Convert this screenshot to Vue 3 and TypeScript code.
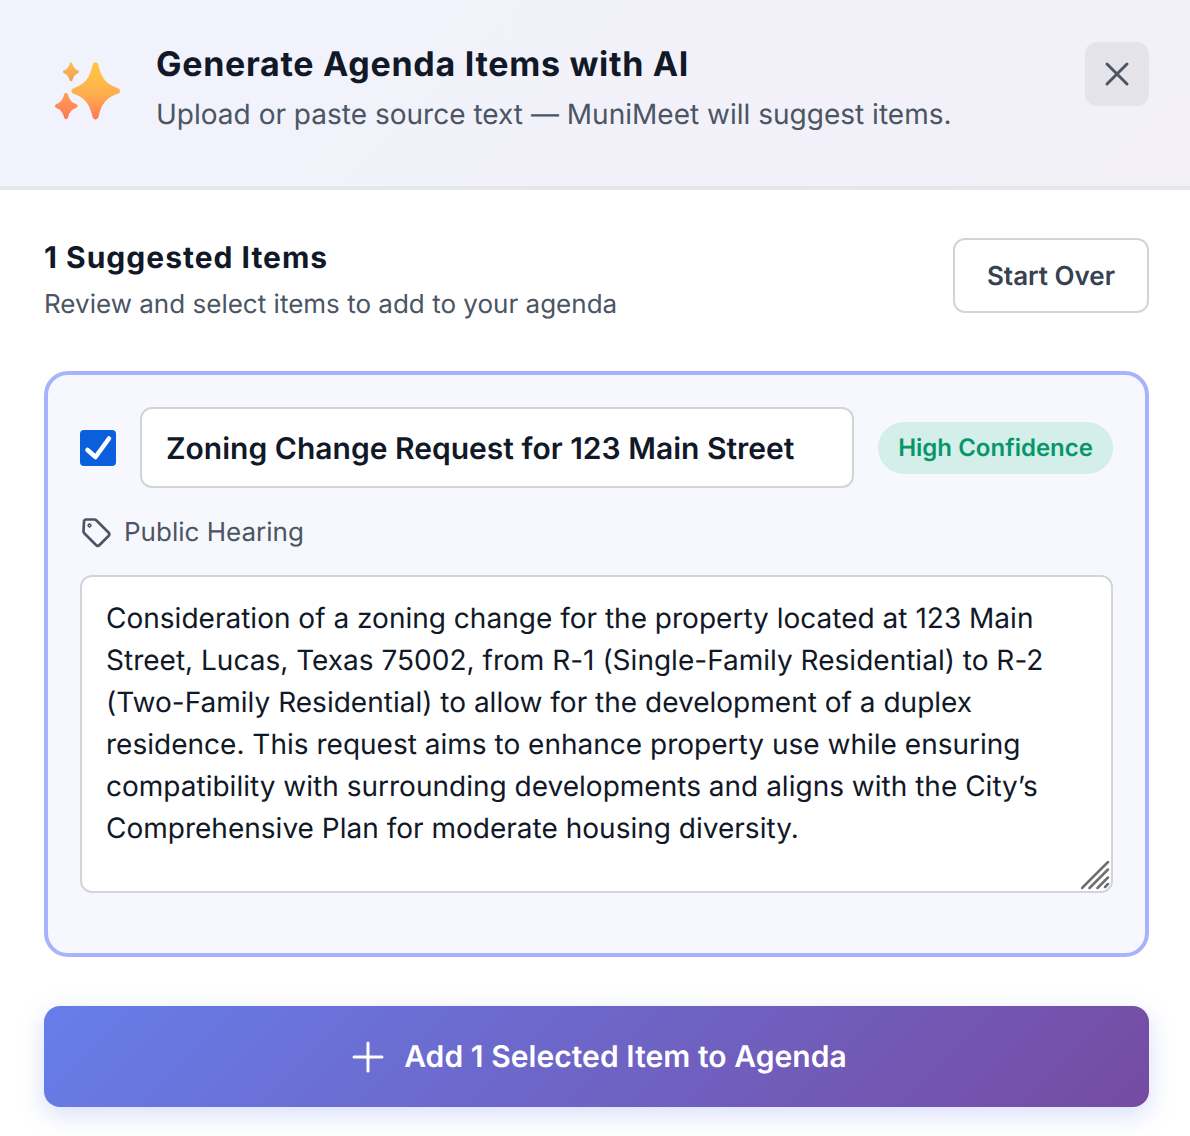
<script setup lang="ts">
import { ref } from 'vue'

const selected = ref(true)
const title = ref('Zoning Change Request for 123 Main Street')
const description = ref(
  'Consideration of a zoning change for the property located at 123 Main Street, Lucas, Texas 75002, from R-1 (Single-Family Residential) to R-2 (Two-Family Residential) to allow for the development of a duplex residence. This request aims to enhance property use while ensuring compatibility with surrounding developments and aligns with the City’s Comprehensive Plan for moderate housing diversity.'
)
</script>

<template>
  <div class="modal">
    <header class="modal-header">
      <svg class="sparkles" width="66" height="58" viewBox="0 0 66 58" aria-hidden="true">
        <defs>
          <linearGradient id="spark-a" x1="0" y1="0" x2="0" y2="1">
            <stop offset="0" stop-color="#ffc445" />
            <stop offset="0.55" stop-color="#ffb04e" />
            <stop offset="1" stop-color="#ff7f55" />
          </linearGradient>
          <linearGradient id="spark-b" x1="0" y1="0" x2="0" y2="1">
            <stop offset="0" stop-color="#fbbf50" />
            <stop offset="1" stop-color="#f49d58" />
          </linearGradient>
          <linearGradient id="spark-c" x1="0" y1="0" x2="0" y2="1">
            <stop offset="0" stop-color="#ff9c50" />
            <stop offset="1" stop-color="#ff7a5a" />
          </linearGradient>
        </defs>
        <path fill="url(#spark-a)" stroke="url(#spark-a)" stroke-width="6" stroke-linejoin="round"
          d="M40.5 3.500 C43.500 18 49.500 25 62 29 C49.500 33 43.500 40 40.5 54.500 C37.500 40 31.500 33 19.500 29 C31.500 25 37.500 18 40.5 3.500 Z" />
        <path fill="url(#spark-b)" stroke="url(#spark-b)" stroke-width="3" stroke-linejoin="round"
          d="M16 2 C17 6.500 18.800 8.600 22.500 9.800 C18.800 11 17 13.200 16 17.800 C15 13.200 13.200 11 9.500 9.800 C13.200 8.600 15 6.500 16 2 Z" />
        <path fill="url(#spark-c)" stroke="url(#spark-c)" stroke-width="4" stroke-linejoin="round"
          d="M11 33 C12.300 39.300 15.300 42.500 20.500 44 C15.300 45.500 12.300 48.700 11 55 C9.700 48.700 6.700 45.500 2 44 C6.700 42.500 9.700 39.300 11 33 Z" />
      </svg>
      <div class="header-text">
        <h2 class="header-title">Generate Agenda Items with AI</h2>
        <p class="header-sub">Upload or paste source text — MuniMeet will suggest items.</p>
      </div>
      <button class="close-btn" type="button" aria-label="Close">
        <svg width="32" height="32" viewBox="0 0 32 32" fill="none" stroke="#4b5563" stroke-width="3" stroke-linecap="round">
          <path d="M6 6 L26 26 M26 6 L6 26" />
        </svg>
      </button>
    </header>

    <main class="modal-body">
      <div class="results-head">
        <div>
          <h3 class="results-title">1 Suggested Items</h3>
          <p class="results-sub">Review and select items to add to your agenda</p>
        </div>
        <button class="start-over" type="button">Start Over</button>
      </div>

      <section class="item-card">
        <div class="item-top">
          <label class="check">
            <input v-model="selected" type="checkbox" />
            <svg v-if="selected" width="36" height="36" viewBox="0 0 36 36" fill="none" stroke="#fff" stroke-width="4.500" stroke-linecap="round" stroke-linejoin="round">
              <path d="M7.500 20 L15.500 27 L29 8.500" />
            </svg>
          </label>
          <input v-model="title" class="title-input" type="text" />
          <span class="confidence">High Confidence</span>
        </div>

        <div class="item-type">
          <svg width="32" height="32" viewBox="0 0 32 32" fill="none" stroke="#4b5563" stroke-width="2.700" stroke-linecap="round" stroke-linejoin="round">
            <path d="M4 5.500 A2 2 0 0 1 6 3.500 H14 A3.500 3.500 0 0 1 16.500 4.500 L28.500 16.500 A2.500 2.500 0 0 1 28.500 20 L19.500 29 A2.500 2.500 0 0 1 16 29 L4.500 17.500 A3 3 0 0 1 3.500 15 Z" />
            <circle cx="9.500" cy="9.500" r="0.800" />
          </svg>
          <span class="type-label">Public Hearing</span>
        </div>

        <div class="desc-wrap">
          <textarea v-model="description" class="desc" rows="7" spellcheck="false"></textarea>
          <svg class="grip" width="30" height="30" viewBox="0 0 30 30" stroke="#6f6f6f" stroke-width="2.500" stroke-linecap="round" aria-hidden="true">
            <path d="M1 27 L27 1 M8.500 27 L27 8.500 M16.500 27 L27 16.500 M24 26 L27 23" />
          </svg>
        </div>
      </section>

      <button class="add-btn" type="button">
        <svg width="32" height="32" viewBox="0 0 32 32" fill="none" stroke="#fff" stroke-width="3" stroke-linecap="round">
          <path d="M16 2 V30 M2 16 H30" />
        </svg>
        Add 1 Selected Item to Agenda
      </button>
    </main>
  </div>
</template>

<style>
html, body {
  margin: 0;
  background: #fff;
}
</style>

<style scoped>
.modal {
  width: 1190px;
  height: 1136px;
  overflow: hidden;
  background: #fff;
  font-family: Inter, "Liberation Sans", sans-serif;
  color: #111827;
  text-rendering: geometricPrecision;
  letter-spacing: 0.01px;
}

.modal-header {
  box-sizing: border-box;
  height: 190px;
  display: flex;
  align-items: flex-start;
  padding: 42px 41px 0 55px;
  background: linear-gradient(135deg, #f1f3fd, #f3f0f7);
  border-bottom: 4px solid #e5e7eb;
}
.sparkles { margin-top: 20px; flex: none; }
.header-text { flex: 1; margin-left: 35px; padding-top: 1px; }
.header-title {
  margin: 0;
  font-size: 34px;
  line-height: 44px;
  font-weight: 700;
  letter-spacing: 0.7px;
  color: #111827;
}
.header-sub {
  margin: 9px 0 0;
  font-size: 28px;
  line-height: 36px;
  color: #4b5563;
}
.close-btn {
  width: 64px;
  height: 64px;
  display: flex;
  align-items: center;
  justify-content: center;
  padding: 0;
  border: 0;
  border-radius: 12px;
  background: rgba(0, 0, 0, 0.05);
}

.modal-body { padding: 48px 41px 0 44px; }

.results-head {
  display: flex;
  justify-content: space-between;
  align-items: flex-start;
}
.results-title {
  margin: 0;
  font-size: 30px;
  line-height: 40px;
  font-weight: 700;
  letter-spacing: 1px;
  color: #111827;
}
.results-sub {
  margin: 8px 0 0;
  padding-top: 1px;
  height: 35px;
  font-size: 26px;
  line-height: 36px;
  color: #4b5563;
}
.start-over {
  width: 196px;
  height: 75px;
  box-sizing: border-box;
  padding: 2px 0 0;
  border: 2px solid #d1d5db;
  border-radius: 12px;
  background: #fff;
  font: 600 26px Inter, "Liberation Sans", sans-serif;
  color: #374151;
  text-rendering: geometricPrecision;
}

.item-card {
  box-sizing: border-box;
  height: 586px;
  margin-top: 49px;
  padding: 32px;
  border: 4px solid #a5b4fc;
  border-radius: 24px;
  background: #f7f8fe;
}
.item-top {
  display: flex;
  align-items: center;
  gap: 24px;
}
.check {
  position: relative;
  flex: none;
  width: 36px;
  height: 36px;
  border-radius: 4px;
  background: #0b5fdc;
}
.check input {
  position: absolute;
  inset: 0;
  margin: 0;
  opacity: 0;
}
.check svg { display: block; }
.title-input {
  box-sizing: border-box;
  flex: 1;
  min-width: 0;
  height: 81px;
  padding: 2px 24px 0;
  border: 2px solid #d1d5db;
  border-radius: 12px;
  background: #fff;
  font: 600 30px Inter, "Liberation Sans", sans-serif;
  letter-spacing: 0.01px;
  color: #111827;
  outline: none;
  text-rendering: geometricPrecision;
}
.confidence {
  flex: none;
  padding: 0 20px;
  height: 52px;
  line-height: 52px;
  border-radius: 26px;
  background: #d4eee9;
  color: #059669;
  font-size: 24px;
  font-weight: 600;
}
.item-type {
  display: flex;
  align-items: center;
  gap: 12px;
  margin-top: 26px;
  font-size: 26px;
  line-height: 36px;
  color: #4b5563;
}
.type-label { padding-top: 1px; margin-bottom: -1px; }
.desc-wrap {
  position: relative;
  margin-top: 25px;
}
.desc {
  display: block;
  box-sizing: border-box;
  width: 100%;
  height: 318px;
  padding: 20px 24px;
  border: 2px solid #d1d5db;
  border-radius: 12px;
  background: #fff;
  font: 400 28px/42px Inter, "Liberation Sans", sans-serif;
  letter-spacing: 0.01px;
  color: #111827;
  resize: none;
  outline: none;
  text-rendering: geometricPrecision;
}
.grip {
  position: absolute;
  right: 2px;
  bottom: 2px;
}

.add-btn {
  box-sizing: border-box;
  width: 1105px;
  height: 101px;
  margin-top: 49px;
  padding: 0 0 0 6px;
  display: flex;
  align-items: center;
  justify-content: center;
  gap: 20px;
  border: 0;
  border-radius: 16px;
  background: linear-gradient(135deg, #667eea, #764ba2);
  box-shadow: 0 8px 24px rgba(102, 126, 234, 0.25);
  color: #fff;
  font: 600 30px Inter, "Liberation Sans", sans-serif;
  letter-spacing: 0.06px;
  text-rendering: geometricPrecision;
}
</style>
